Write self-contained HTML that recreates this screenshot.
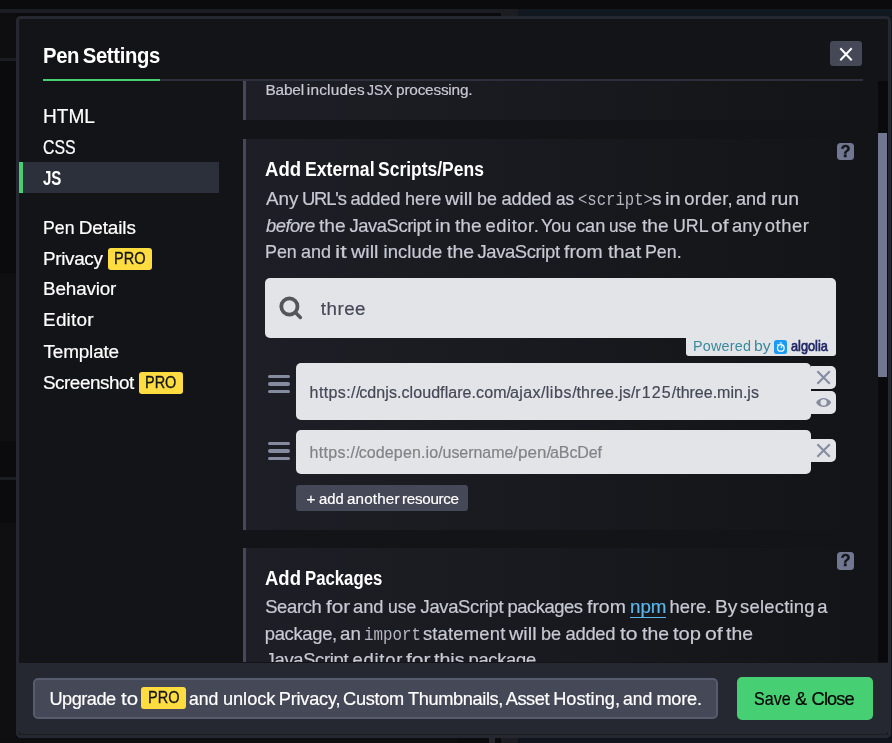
<!DOCTYPE html>
<html lang="en">
<head>
<meta charset="utf-8">
<title>Pen Settings</title>
<style>
*{box-sizing:border-box}
html,body{margin:0;padding:0}
body{width:892px;height:743px;overflow:hidden;position:relative;background:#0b0b0d;font-family:"Liberation Sans",sans-serif}
.t{position:absolute;white-space:pre;line-height:30px;font-family:'Liberation Sans', sans-serif;transform-origin:0 50%;display:block}
.k0{font-size:21.4px;color:#fff;font-weight:700;word-spacing:-1.82px;}
.k1{font-size:19.6px;color:#fff;word-spacing:-1.67px;-webkit-text-stroke:0.2px;}
.k2{font-size:19.6px;color:#fff;font-weight:700;word-spacing:-1.67px;}
.k3{font-size:18.9px;color:#fff;-webkit-text-stroke:0.2px;}
.k4{font-size:18.9px;color:#fff;word-spacing:-1.61px;-webkit-text-stroke:0.2px;}
.k5{font-size:16px;color:#131417;word-spacing:-1.36px;-webkit-text-stroke:0.3px;}
.k6{font-size:15.4px;color:#c7c9d3;-webkit-text-stroke:0.2px;}
.k7{font-size:20.0px;color:#fff;font-weight:700;}
.k8{font-size:18.4px;color:#c7c9d3;-webkit-text-stroke:0.2px;}
.k9{font-size:17.6px;color:#b4b6c2;font-family:'Liberation Mono', monospace;}
.k10{font-size:18.4px;color:#c7c9d3;font-style:italic;-webkit-text-stroke:0.2px;}
.k11{font-size:18.8px;color:#444857;word-spacing:-1.60px;-webkit-text-stroke:0.2px;}
.k12{font-size:14.4px;color:#3a8a9e;}
.k13{font-size:14.6px;color:#202867;word-spacing:-1.24px;-webkit-text-stroke:0.7px;}
.k14{font-size:16px;color:#444857;-webkit-text-stroke:0.2px;}
.k15{font-size:16px;color:#828388;-webkit-text-stroke:0.2px;}
.k16{font-size:15.2px;color:#fff;-webkit-text-stroke:0.2px;}
.k17{font-size:18.4px;color:#5bb6ea;word-spacing:-1.56px;-webkit-text-stroke:0.2px;}
.k18{font-size:18.2px;color:#fff;-webkit-text-stroke:0.2px;}
.k19{font-size:18.2px;color:#000;-webkit-text-stroke:0.2px;}
.a{position:absolute}
/* page behind overlay */
.bg{position:absolute}
#modal{position:absolute;left:16px;top:16px;width:875px;height:722px;border:3px solid #252830;border-radius:4.5px;background:#131417}
#page{position:absolute;left:0;top:0;width:892px;height:743px;will-change:transform}
#scroll{position:absolute;left:0;top:81px;width:892px;height:581px;overflow:hidden}
#scroll>.in{position:absolute;left:0;top:-81px;width:892px;height:900px}
.panel{position:absolute;left:243px;width:620px;border-left:3px solid #444857;background:linear-gradient(90deg,#1e1f26 0%,#131417 100%)}
.lt{background:#e3e4e8}
.help{position:absolute;width:17px;height:17px;border-radius:3.5px;background:#717790;color:#131417;font-weight:700;font-size:16.5px;line-height:17px;text-align:center;overflow:hidden;-webkit-text-stroke:0.4px}
.pro{position:absolute;background:#ffdd40;border-radius:3px}
.ham{position:absolute;width:22px;height:19px}
.ham i{position:absolute;left:0;width:22px;height:3.4px;border-radius:2px;background:#868ca0}
</style>
</head>
<body>
<div id="page">
<!-- dimmed editor behind the modal -->
<div class="bg" style="left:0;top:9px;width:501px;height:4px;background:#1c1d22"></div>
<div class="bg" style="left:501px;top:9px;width:17px;height:7px;background:#1c1d22"></div>
<div class="bg" style="left:518px;top:9px;width:374px;height:8px;background:#121820"></div>
<div class="bg" style="left:0;top:13px;width:16px;height:45px;background:#0e0e11"></div>
<div class="bg" style="left:0;top:58px;width:16px;height:3px;background:#1c1d22"></div>
<div class="bg" style="left:0;top:273px;width:16px;height:168px;background:#0f0f12"></div>
<div class="bg" style="left:0;top:477px;width:16px;height:3px;background:#1c1d22"></div>
<div class="bg" style="left:0;top:523px;width:16px;height:220px;background:#0f0f12"></div>
<div class="bg" style="left:0;top:738px;width:458px;height:5px;background:#0e0e10"></div>
<div class="bg" style="left:489px;top:738px;width:6px;height:5px;background:#26272c"></div>
<div class="bg" style="left:501px;top:738px;width:17px;height:5px;background:#1c1d22"></div>
<div class="bg" style="left:518px;top:738px;width:374px;height:5px;background:#10151d"></div>
<div class="bg" style="left:890px;top:16px;width:2px;height:727px;background:#10151d"></div>

<div id="modal"></div>

<!-- header -->
<div class="a" style="left:43px;top:79px;width:820px;height:2px;background:#2c303a"></div>
<div class="a" style="left:43px;top:79px;width:117px;height:2px;background:#47cf73"></div>
<div class="a" style="left:830px;top:41px;width:32px;height:25px;border-radius:3px;background:#444857">
<svg width="32" height="25" viewBox="0 0 32 25" style="position:absolute;left:0;top:0"><path d="M10.3 7.3 L21.7 19.3 M21.7 7.3 L10.3 19.3" stroke="#fff" stroke-width="2" fill="none"/></svg>
</div>

<!-- sidebar -->
<div class="a" style="left:19px;top:162px;width:200px;height:31px;background:#2c303a;border-left:4px solid #47cf73"></div>
<div class="pro" style="left:108px;top:248px;width:44px;height:22px"></div>
<div class="pro" style="left:139px;top:372px;width:44px;height:22px"></div>
<span class="t k0" style="left:43.1px;top:41px;letter-spacing:-0.35px;transform:scaleX(0.947);">Pen Settings</span>
<span class="t k1" style="left:43.1px;top:101px;transform:scaleX(0.973);">HTML</span>
<span class="t k1" style="left:43.1px;top:132px;transform:scaleX(0.809);">CSS</span>
<span class="t k2" style="left:42.8px;top:163px;transform:scaleX(0.768);">JS</span>
<span class="t k3" style="left:43.2px;top:213px;transform:scaleX(0.937);">Pen</span>
<span class="t k3" style="left:78.7px;top:213px;letter-spacing:-0.09px;">Details</span>
<span class="t k4" style="left:43.1px;top:244px;letter-spacing:-0.36px;">Privacy</span>
<span class="t k5" style="left:113.9px;top:244px;transform:scaleX(0.908);">PRO</span>
<span class="t k4" style="left:43.1px;top:274px;letter-spacing:-0.19px;">Behavior</span>
<span class="t k4" style="left:43.1px;top:305px;letter-spacing:0.20px;">Editor</span>
<span class="t k4" style="left:43.5px;top:337px;letter-spacing:-0.15px;">Template</span>
<span class="t k4" style="left:42.9px;top:368px;letter-spacing:-0.46px;">Screenshot</span>
<span class="t k5" style="left:144.9px;top:368px;transform:scaleX(0.905);">PRO</span>

<!-- scrolling settings area -->
<div id="scroll"><div class="in">
<div class="panel" style="top:20px;height:100px"></div>
<div class="panel" style="top:139px;height:391px"></div>
<div class="panel" style="top:548px;height:300px"></div>
<div class="help" style="left:837px;top:143px">?</div>
<div class="help" style="left:837px;top:552px;height:18px">?</div>

<!-- search -->
<div class="a lt" style="left:265px;top:278px;width:571px;height:60px;border-radius:5px 5px 0 5px"></div>
<div class="a lt" style="left:686px;top:337px;width:150px;height:19px;border-radius:0 0 3px 3px"></div>
<svg class="a" style="left:276px;top:294px" width="30" height="28" viewBox="0 0 30 28"><circle cx="13.4" cy="12.5" r="8.1" fill="none" stroke="#55565b" stroke-width="3.8"/><path d="M19.4 18.5 L24.4 23.5" stroke="#55565b" stroke-width="3.4" stroke-linecap="round"/></svg>
<div class="a" style="left:773.8px;top:339.6px;width:13.3px;height:14px;border-radius:2.5px;background:#1c9bf5">
<svg width="13.5" height="14.5" viewBox="0 0 13.5 14.5" style="position:absolute;left:0;top:0"><circle cx="6.8" cy="7.9" r="3.3" fill="none" stroke="#fff" stroke-width="1.3"/><path d="M6.8 7.9 L8.3 5.6 M5.6 3 H8 M3.4 4.2 L4.3 5" stroke="#fff" stroke-width="1.1" fill="none"/></svg>
</div>

<!-- resource rows -->
<div class="ham" style="left:268px;top:375px"><i style="top:0"></i><i style="top:7.3px"></i><i style="top:14.7px"></i></div>
<div class="a lt" style="left:296px;top:363px;width:515px;height:57px;border-radius:5px"></div>
<div class="a lt" style="left:811px;top:366px;width:25px;height:23px;border-radius:0 5px 5px 0"></div>
<div class="a lt" style="left:811px;top:391px;width:25px;height:23px;border-radius:0 5px 5px 0"></div>
<svg class="a" style="left:811px;top:366px" width="25" height="23" viewBox="0 0 25 23"><path d="M6.4 5.2 L18.8 17.8 M18.8 5.2 L6.4 17.8" stroke="#868ca0" stroke-width="2.1" fill="none"/></svg>
<svg class="a" style="left:811px;top:391px" width="25" height="23" viewBox="0 0 25 23"><path d="M5 11.4 C8.5 5.4 16.7 5.4 20.2 11.4 C16.7 17.4 8.5 17.4 5 11.4 Z" fill="#868ca0"/><circle cx="12.6" cy="11.4" r="3.1" fill="#e3e4e8"/></svg>

<div class="ham" style="left:268px;top:442px"><i style="top:0"></i><i style="top:7.3px"></i><i style="top:14.7px"></i></div>
<div class="a lt" style="left:296px;top:430px;width:515px;height:44px;border-radius:5px"></div>
<div class="a lt" style="left:811px;top:439px;width:25px;height:23px;border-radius:0 5px 5px 0"></div>
<svg class="a" style="left:811px;top:439px" width="25" height="23" viewBox="0 0 25 23"><path d="M6.4 5.2 L18.8 17.8 M18.8 5.2 L6.4 17.8" stroke="#868ca0" stroke-width="2.1" fill="none"/></svg>

<div class="a" style="left:296px;top:485px;width:172px;height:26px;border-radius:3px;background:#444857"></div>
<div class="a" style="left:630px;top:617px;width:35.5px;height:1.3px;background:#5bb6ea"></div>
<span class="t k6" style="left:265.5px;top:75px;letter-spacing:-0.18px;">Babel</span>
<span class="t k6" style="left:306.8px;top:75px;letter-spacing:0.19px;">includes</span>
<span class="t k6" style="left:366.9px;top:75px;transform:scaleX(0.907);">JSX</span>
<span class="t k6" style="left:396.1px;top:75px;letter-spacing:-0.23px;">processing.</span>
<span class="t k7" style="left:265.4px;top:154px;transform:scaleX(0.928);">Add</span>
<span class="t k7" style="left:305.2px;top:154px;transform:scaleX(0.881);">External</span>
<span class="t k7" style="left:378.2px;top:154px;transform:scaleX(0.874);">Scripts/Pens</span>
<span class="t k8" style="left:266.1px;top:184px;transform:scaleX(1.023);">Any</span>
<span class="t k8" style="left:302.0px;top:184px;letter-spacing:-1.16px;">URL&#x27;s</span>
<span class="t k8" style="left:350.4px;top:184px;letter-spacing:-0.29px;">added</span>
<span class="t k8" style="left:405.1px;top:184px;transform:scaleX(0.984);">here</span>
<span class="t k8" style="left:445.3px;top:184px;transform:scaleX(1.076);">will</span>
<span class="t k8" style="left:477.4px;top:184px;transform:scaleX(0.971);">be</span>
<span class="t k8" style="left:501.5px;top:184px;letter-spacing:-0.29px;">added</span>
<span class="t k8" style="left:555.7px;top:184px;transform:scaleX(0.935);">as</span>
<span class="t k9" style="left:577.5px;top:185px;transform:scaleX(0.887);">&lt;script&gt;</span>
<span class="t k8" style="left:652.2px;top:184px;">s</span>
<span class="t k8" style="left:665.2px;top:184px;transform:scaleX(1.096);">in</span>
<span class="t k8" style="left:684.2px;top:184px;letter-spacing:0.30px;">order,</span>
<span class="t k8" style="left:735.7px;top:184px;transform:scaleX(0.984);">and</span>
<span class="t k8" style="left:770.5px;top:184px;transform:scaleX(1.052);">run</span>
<span class="t k10" style="left:266.1px;top:211px;letter-spacing:-0.58px;">before</span>
<span class="t k8" style="left:319.1px;top:211px;transform:scaleX(1.043);">the</span>
<span class="t k8" style="left:349.6px;top:211px;letter-spacing:-0.46px;">JavaScript</span>
<span class="t k8" style="left:435.4px;top:211px;transform:scaleX(1.094);">in</span>
<span class="t k8" style="left:454.7px;top:211px;transform:scaleX(1.043);">the</span>
<span class="t k8" style="left:485.5px;top:211px;letter-spacing:0.53px;">editor.</span>
<span class="t k8" style="left:541.2px;top:211px;transform:scaleX(0.973);">You</span>
<span class="t k8" style="left:575.8px;top:211px;transform:scaleX(0.988);">can</span>
<span class="t k8" style="left:609.1px;top:211px;transform:scaleX(0.933);">use</span>
<span class="t k8" style="left:641.5px;top:211px;transform:scaleX(1.043);">the</span>
<span class="t k8" style="left:672.7px;top:211px;transform:scaleX(0.969);">URL</span>
<span class="t k8" style="left:710.8px;top:211px;transform:scaleX(1.148);">of</span>
<span class="t k8" style="left:731.8px;top:211px;transform:scaleX(1.001);">any</span>
<span class="t k8" style="left:764.7px;top:211px;letter-spacing:0.59px;">other</span>
<span class="t k8" style="left:265.2px;top:237px;transform:scaleX(0.972);">Pen</span>
<span class="t k8" style="left:300.5px;top:237px;transform:scaleX(0.980);">and</span>
<span class="t k8" style="left:335.3px;top:237px;transform:scaleX(1.270);">it</span>
<span class="t k8" style="left:351.1px;top:237px;transform:scaleX(1.076);">will</span>
<span class="t k8" style="left:383.5px;top:237px;letter-spacing:0.08px;">include</span>
<span class="t k8" style="left:446.7px;top:237px;transform:scaleX(1.061);">the</span>
<span class="t k8" style="left:477.5px;top:237px;letter-spacing:-0.37px;">JavaScript</span>
<span class="t k8" style="left:564.2px;top:237px;transform:scaleX(1.054);">from</span>
<span class="t k8" style="left:607.5px;top:237px;transform:scaleX(1.081);">that</span>
<span class="t k8" style="left:644.9px;top:237px;transform:scaleX(0.968);">Pen.</span>
<span class="t k11" style="left:320.8px;top:294px;letter-spacing:0.48px;">three</span>
<span class="t k12" style="left:693.0px;top:331px;letter-spacing:0.20px;">Powered</span>
<span class="t k12" style="left:753.7px;top:331px;transform:scaleX(1.098);">by</span>
<span class="t k13" style="left:790.9px;top:331px;transform:scaleX(0.873);">algolia</span>
<span class="t k14" style="left:309.6px;top:378px;letter-spacing:0.39px;">https://</span><span class="t k14" style="left:359.3px;top:378px;letter-spacing:0.07px;">cdnjs.cloudflare.com/</span><span class="t k14" style="left:510.1px;top:378px;letter-spacing:0.36px;">ajax/</span><span class="t k14" style="left:545.7px;top:378px;letter-spacing:0.61px;">libs/</span><span class="t k14" style="left:576.4px;top:378px;letter-spacing:0.28px;">three.js/</span><span class="t k14" style="left:635.2px;top:378px;letter-spacing:1.15px;">r125/</span><span class="t k14" style="left:676.2px;top:378px;letter-spacing:0.00px;">three.min.js</span>
<span class="t k15" style="left:309.6px;top:438px;letter-spacing:0.29px;">https://</span><span class="t k15" style="left:358.7px;top:438px;letter-spacing:0.12px;">codepen.io/</span><span class="t k15" style="left:442.6px;top:438px;letter-spacing:-0.06px;">username/</span><span class="t k15" style="left:517.6px;top:438px;transform:scaleX(1.065);">pen/</span><span class="t k15" style="left:550.0px;top:438px;letter-spacing:-0.09px;">aBcDef</span>
<span class="t k16" style="left:306.5px;top:484px;">+</span>
<span class="t k16" style="left:319.0px;top:484px;transform:scaleX(0.977);">add</span>
<span class="t k16" style="left:347.0px;top:484px;letter-spacing:0.16px;">another</span>
<span class="t k16" style="left:402.1px;top:484px;letter-spacing:-0.31px;">resource</span>
<span class="t k7" style="left:265.1px;top:563px;transform:scaleX(0.924);">Add</span>
<span class="t k7" style="left:304.9px;top:563px;transform:scaleX(0.837);">Packages</span>
<span class="t k8" style="left:265.2px;top:592px;letter-spacing:-0.34px;">Search</span>
<span class="t k8" style="left:325.5px;top:592px;transform:scaleX(1.126);">for</span>
<span class="t k8" style="left:353.0px;top:592px;transform:scaleX(0.995);">and</span>
<span class="t k8" style="left:388.3px;top:592px;transform:scaleX(0.952);">use</span>
<span class="t k8" style="left:420.5px;top:592px;letter-spacing:-0.31px;">JavaScript</span>
<span class="t k8" style="left:507.6px;top:592px;letter-spacing:-0.48px;">packages</span>
<span class="t k8" style="left:586.9px;top:592px;transform:scaleX(1.057);">from</span>
<span class="t k17" style="left:629.5px;top:592px;transform:scaleX(1.020);">npm</span>
<span class="t k8" style="left:669.4px;top:592px;letter-spacing:0.04px;">here.</span>
<span class="t k8" style="left:714.7px;top:592px;transform:scaleX(1.048);">By</span>
<span class="t k8" style="left:740.1px;top:592px;letter-spacing:0.22px;">selecting</span>
<span class="t k8" style="left:817.2px;top:592px;">a</span>
<span class="t k8" style="left:264.8px;top:619px;letter-spacing:-0.32px;">package,</span>
<span class="t k8" style="left:340.0px;top:619px;transform:scaleX(1.018);">an</span>
<span class="t k9" style="left:363.8px;top:620px;transform:scaleX(0.900);">import</span>
<span class="t k8" style="left:422.9px;top:619px;letter-spacing:0.20px;">statement</span>
<span class="t k8" style="left:509.1px;top:619px;transform:scaleX(1.082);">will</span>
<span class="t k8" style="left:541.3px;top:619px;transform:scaleX(0.981);">be</span>
<span class="t k8" style="left:565.5px;top:619px;letter-spacing:-0.27px;">added</span>
<span class="t k8" style="left:620.4px;top:619px;transform:scaleX(1.149);">to</span>
<span class="t k8" style="left:642.1px;top:619px;transform:scaleX(1.054);">the</span>
<span class="t k8" style="left:673.3px;top:619px;transform:scaleX(1.096);">top</span>
<span class="t k8" style="left:704.8px;top:619px;transform:scaleX(1.157);">of</span>
<span class="t k8" style="left:726.3px;top:619px;transform:scaleX(1.054);">the</span>
<span class="t k8" style="left:265.6px;top:645px;letter-spacing:-0.32px;">JavaScript</span>
<span class="t k8" style="left:352.5px;top:645px;letter-spacing:0.76px;">editor</span>
<span class="t k8" style="left:406.0px;top:645px;transform:scaleX(1.138);">for</span>
<span class="t k8" style="left:434.0px;top:645px;transform:scaleX(1.065);">this</span>
<span class="t k8" style="left:468.5px;top:645px;letter-spacing:-0.32px;">package.</span>
</div></div>

<!-- scrollbar -->
<div class="a" style="left:878px;top:81px;width:9.6px;height:581px;background:#0a0a0c"></div>
<div class="a" style="left:878px;top:133px;width:9.3px;height:244px;background:#717790"></div>

<!-- footer -->
<div class="a" style="left:19px;top:734px;width:869px;height:1px;background:#1c1e24"></div>
<div class="a" style="left:19px;top:662.5px;width:869px;height:71.5px;background:#252830;border-radius:0 0 3px 3px"></div>
<div class="a" style="left:33px;top:678px;width:685px;height:41px;border:2px solid #565b6e;border-radius:5px;background:#444857"></div>
<div class="pro" style="left:141px;top:687px;width:45px;height:22px"></div>
<div class="a" style="left:737px;top:677px;width:136px;height:43px;border-radius:5px;background:#47cf73"></div>
<span class="t k18" style="left:49.4px;top:684px;letter-spacing:-0.50px;">Upgrade</span>
<span class="t k18" style="left:120.6px;top:684px;transform:scaleX(1.122);">to</span>
<span class="t k5" style="left:147.5px;top:683px;transform:scaleX(0.908);">PRO</span>
<span class="t k18" style="left:189.2px;top:684px;transform:scaleX(0.967);">and</span>
<span class="t k18" style="left:222.9px;top:684px;letter-spacing:-0.01px;">unlock</span>
<span class="t k18" style="left:278.8px;top:684px;letter-spacing:-0.24px;">Privacy,</span>
<span class="t k18" style="left:343.1px;top:684px;letter-spacing:-0.34px;">Custom</span>
<span class="t k18" style="left:407.9px;top:684px;letter-spacing:-0.36px;">Thumbnails,</span>
<span class="t k18" style="left:505.7px;top:684px;letter-spacing:-0.42px;">Asset</span>
<span class="t k18" style="left:553.2px;top:684px;letter-spacing:0.01px;">Hosting,</span>
<span class="t k18" style="left:622.7px;top:684px;transform:scaleX(0.967);">and</span>
<span class="t k18" style="left:656.4px;top:684px;letter-spacing:-0.23px;">more.</span>
<span class="t k19" style="left:754.4px;top:684px;transform:scaleX(0.885);">Save</span>
<span class="t k19" style="left:794.9px;top:684px;">&amp;</span>
<span class="t k19" style="left:811.6px;top:684px;letter-spacing:-0.85px;">Close</span>
</div>
</body>
</html>
